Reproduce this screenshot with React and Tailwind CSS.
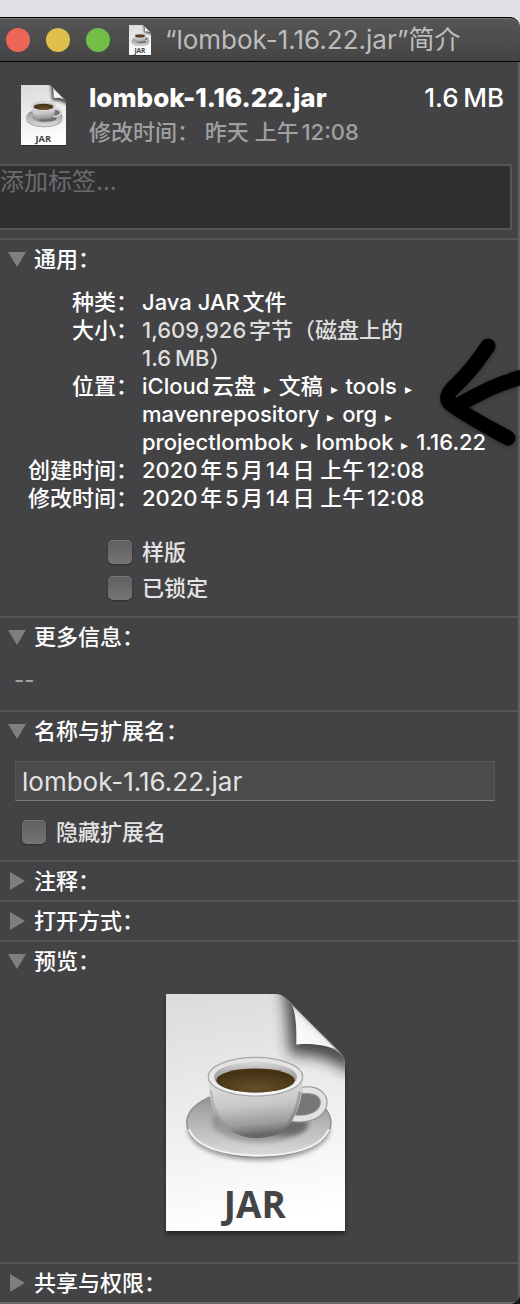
import React, { useState } from 'react';

const JarIcon = ({ id, className, labelSize = 110 }) => {
    return (
        <svg viewBox="78 57 534 710" preserveAspectRatio="none" className={className} aria-hidden="true">
            <defs>
                <linearGradient id={id + '-page'} x1="0.2" y1="0" x2="0.35" y2="1">
                    <stop offset="0" stopColor="#dcdcdc" />
                    <stop offset="0.5" stopColor="#ededed" />
                    <stop offset="1" stopColor="#ffffff" />
                </linearGradient>
                <linearGradient id={id + '-fold'} x1="0" y1="1" x2="0.6" y2="0.35">
                    <stop offset="0.1" stopColor="#ffffff" />
                    <stop offset="0.7" stopColor="#f4f4f4" />
                    <stop offset="1" stopColor="#b5b5b5" />
                </linearGradient>
                <linearGradient id={id + '-cup'} x1="0" y1="0" x2="0.15" y2="1">
                    <stop offset="0" stopColor="#e4e4e4" />
                    <stop offset="0.5" stopColor="#c8c8c8" />
                    <stop offset="0.82" stopColor="#9c9c9c" />
                    <stop offset="1" stopColor="#666" />
                </linearGradient>
                <linearGradient id={id + '-saucer'} x1="0" y1="0" x2="0" y2="1">
                    <stop offset="0" stopColor="#8a8a8a" />
                    <stop offset="0.5" stopColor="#b4b4b4" />
                    <stop offset="1" stopColor="#dcdcdc" />
                </linearGradient>
                <linearGradient id={id + '-rim'} x1="0" y1="0" x2="0" y2="1">
                    <stop offset="0" stopColor="#e2e2e2" />
                    <stop offset="0.5" stopColor="#e8e8e8" />
                    <stop offset="1" stopColor="#f8f8f8" />
                </linearGradient>
                <linearGradient id={id + '-inside'} x1="0" y1="0" x2="0" y2="1">
                    <stop offset="0" stopColor="#dadada" />
                    <stop offset="0.35" stopColor="#adadad" />
                    <stop offset="1" stopColor="#858585" />
                </linearGradient>
                <radialGradient id={id + '-coffee'} cx="0.5" cy="0.8" r="0.65">
                    <stop offset="0" stopColor="#67502a" />
                    <stop offset="1" stopColor="#443214" />
                </radialGradient>
                <filter id={id + '-blur'} x="-50%" y="-50%" width="200%" height="200%">
                    <feGaussianBlur stdDeviation="20" />
                </filter>
                <filter id={id + '-soft'} x="-20%" y="-20%" width="140%" height="140%">
                    <feGaussianBlur stdDeviation="7" />
                </filter>
                <clipPath id={id + '-clip'}>
                    <path d="M78 57H405C425 58 440 72 455 92L590 225C605 238 612 250 612 268V767H78Z" />
                </clipPath>
            </defs>
            <path d="M78 66H405L612 276V777H78Z" fill="#000" opacity="0.45" filter={`url(#${id}-soft)`} />
            <g clipPath={`url(#${id}-clip)`}>
                <rect x="78" y="57" width="534" height="710" fill={`url(#${id}-page)`} />
                <path d="M425 30C436 90 444 170 446 238C520 238 570 250 640 300V30Z" fill="#222" opacity="0.8" filter={`url(#${id}-blur)`} />
                <ellipse cx="355" cy="464" rx="212" ry="92" fill="#444" opacity="0.5" filter={`url(#${id}-soft)`} />
            </g>
            <path d="M410 57C430 62 440 74 455 92C466 120 468 160 467 208C520 204 560 210 584 226C600 238 612 250 612 272C609 252 602 240 588 222L456 90C440 72 425 58 410 57Z" fill="#999" />
            <path d="M455 92C466 120 468 160 467 208C510 204 552 210 584 222Z" fill={`url(#${id}-fold)`} />

            <ellipse cx="355" cy="442" rx="215" ry="104" fill={`url(#${id}-saucer)`} stroke="#8b8b8b" strokeWidth="4" />
            <path d="M146 462C170 520 262 541 355 541C448 541 540 520 564 462" fill="none" stroke="#f2f2f2" strokeWidth="6" />
            <ellipse cx="360" cy="440" rx="145" ry="62" fill="#707070" opacity="0.45" filter={`url(#${id}-soft)`} />
            <ellipse cx="430" cy="452" rx="70" ry="30" fill="#3d3d3d" opacity="0.5" filter={`url(#${id}-soft)`} />
            <path d="M484 346C530 340 552 362 548 388C542 420 500 436 455 430" fill="#777" stroke="#909090" strokeWidth="23" />
            <path d="M484 346C530 340 552 362 548 388C542 420 500 436 455 428" fill="none" stroke="#e2e2e2" strokeWidth="17" />
            <path d="M204 310C206 370 218 420 256 455C285 482 320 489 350 489C385 489 415 480 440 455C472 422 485 370 486 310Z" fill={`url(#${id}-cup)`} />
            <path d="M212 345C217 400 235 432 262 454" fill="none" stroke="#888" strokeWidth="6" opacity="0.4" />
            <path d="M477 350C470 400 452 440 425 463" fill="none" stroke="#777" strokeWidth="8" opacity="0.5" />
            <ellipse cx="345" cy="305" rx="141" ry="58" fill={`url(#${id}-rim)`} stroke="#a8a8a8" strokeWidth="4" />
            <ellipse cx="345" cy="306" rx="124" ry="46" fill={`url(#${id}-inside)`} />
            <ellipse cx="345" cy="316" rx="117" ry="36" fill={`url(#${id}-coffee)`} />
            <text x="343" y="728" textAnchor="middle" fontSize={labelSize} fill="#444" className="font-['Open_Sans',sans-serif] font-bold">
                JAR
            </text>
        </svg>
    );
};

const Section = ({ title, defaultOpen = false, children }) => {
    const [open, setOpen] = useState(defaultOpen);

    return (
        <section className="border-t-2 border-[#565658]">
            <h2>
                <button
                    type="button"
                    aria-expanded={open}
                    onClick={() => setOpen(!open)}
                    className="flex h-[38px] w-full items-center gap-2 pl-2 text-left font-medium text-white"
                >
                    <svg viewBox="0 0 18 18" className="h-[18px] w-[18px] fill-[#7f7f80]" aria-hidden="true">
                        {open ? <path d="M0 2H18L9 17Z" /> : <path d="M2 0V18L17 9Z" />}
                    </svg>
                    {title}
                </button>
            </h2>
            {open && children}
        </section>
    );
};

const Checkbox = ({ id, label }) => {
    return (
        <div className="flex h-9 items-center gap-[10px]">
            <input
                id={id}
                type="checkbox"
                className="h-6 w-6 appearance-none rounded-[5px] bg-linear-to-b from-[#5f5f61] to-[#757577] shadow-[0_1px_2px_rgba(0,0,0,0.35),inset_0_1px_0_#77777a] checked:bg-blue-500"
            />
            <label htmlFor={id} className="text-[#e3e3e3]">{label}</label>
        </div>
    );
};

const Row = ({ label, muted = false, children }) => {
    return (
        <div className="flex">
            <dt className="w-[138px] shrink-0 text-right">{label}</dt>
            <dd className={muted ? 'ml-1 text-[#dedede]' : 'ml-1'}>{children}</dd>
        </div>
    );
};

const Sep = () => <span className="mx-[2px] text-[14px] leading-none">▸</span>;

const App = () => {
    return (
        <div
            lang="zh-CN"
            className="bg-[linear-gradient(#e1e1e7_0,#d8d8de_50%,#141414_50%)] pt-[17px] font-['Inter','Noto_Sans_CJK_SC',sans-serif] text-[22px] leading-7 [text-autospace:normal]"
        >
            <main className="relative overflow-hidden rounded-r-[10px] bg-[#434345] font-medium text-white">
                <header className="flex h-[45px] items-center rounded-tr-[10px] border-y border-black bg-linear-to-b from-[#565657] to-[#444445] pl-[6px] shadow-[inset_0_1px_0_#77777a]">
                    <div className="flex gap-4">
                        <button type="button" aria-label="关闭" className="h-6 w-6 rounded-full bg-[#ec6559]" />
                        <button type="button" aria-label="最小化" className="h-6 w-6 rounded-full bg-[#e0bf4c]" />
                        <button type="button" aria-label="缩放" className="h-6 w-6 rounded-full bg-[#72be47]" />
                    </div>
                    <JarIcon id="title" labelSize={160} className="ml-[19px] h-[30px] w-[22px] overflow-visible" />
                    <h1 className="ml-[14px] text-[26px] font-normal whitespace-nowrap text-[#bdbdbe]">“lombok-1.16.22.jar”简介</h1>
                </header>

                <div className="border-r-2 border-b-2 border-r-[#5f5f60] border-b-[#6b6b6d]">
                    <div className="flex pt-[18px] pr-[14px] pb-4 pl-[21px]">
                        <JarIcon id="head" className="mt-[5px] h-[60px] w-[45px] overflow-visible" />
                        <div className="ml-[23px] grow">
                            <div className="flex justify-between text-[26px] leading-9">
                                <strong className="font-extrabold">lombok-1.16.22.jar</strong>
                                <span>1.6{'\u2009'}MB</span>
                            </div>
                            <p className="leading-8 text-[#a0a0a1]">修改时间： 昨天 上午12:08</p>
                        </div>
                    </div>

                    <textarea
                        aria-label="标签"
                        placeholder="添加标签..."
                        className="mr-[6px] mb-2 block h-[66px] w-[calc(100%-6px)] resize-none border-y-2 border-r-2 border-[#565658] bg-[#303032] text-[24px] leading-8 font-normal [text-autospace:no-autospace] placeholder:text-[#6b6b6d]"
                    />

                    <Section title="通用：" defaultOpen>
                        <dl className="pt-[10px]">
                            <Row label="种类：">Java JAR文件</Row>
                            <Row label="大小：" muted>
                                1,609,926字节（磁盘上的<br />
                                1.6{'\u2009'}MB）
                            </Row>
                            <Row label="位置：">
                                iCloud云盘 <Sep /> 文稿 <Sep /> tools <Sep /><br />
                                mavenrepository <Sep /> org <Sep /><br />
                                projectlombok <Sep /> lombok <Sep /> 1.16.22
                            </Row>
                            <Row label="创建时间：">2020年5月14日 上午12:08</Row>
                            <Row label="修改时间：">2020年5月14日 上午12:08</Row>
                        </dl>
                        <div className="pt-[22px] pb-[10px] pl-[108px]">
                            <Checkbox id="stationery" label="样版" />
                            <Checkbox id="locked" label="已锁定" />
                        </div>
                    </Section>

                    <Section title="更多信息：" defaultOpen>
                        <p className="pt-[10px] pb-4 pl-[14px] text-[#a0a0a1]">--</p>
                    </Section>

                    <Section title="名称与扩展名：" defaultOpen>
                        <div className="pt-[11px] pr-[23px] pb-[10px] pl-[15px]">
                            <input
                                type="text"
                                aria-label="名称与扩展名"
                                defaultValue="lombok-1.16.22.jar"
                                className="mb-[13px] block h-10 w-full border border-[#555557] border-b-[#7a7a7c] bg-[#4b4b4c] px-[6px] text-[26px] font-normal text-[#e3e3e3]"
                            />
                            <div className="pl-[7px]">
                                <Checkbox id="hide-extension" label="隐藏扩展名" />
                            </div>
                        </div>
                    </Section>

                    <Section title="注释：" />
                    <Section title="打开方式：" />

                    <Section title="预览：" defaultOpen>
                        <div className="flex justify-center pt-[14px] pr-[8px] pb-[31px]">
                            <JarIcon id="preview" className="h-[237px] w-[179px] overflow-visible" />
                        </div>
                    </Section>

                    <Section title="共享与权限：" />
                </div>

                {/* hand-drawn arrow pointing at the location row */}
                <svg
                    viewBox="430 330 90 120"
                    className="pointer-events-none absolute top-[313px] right-0 h-[120px] w-[90px] fill-none stroke-black drop-shadow-[0_1px_2px_rgba(0,0,0,0.4)]"
                    strokeWidth="15"
                    strokeLinecap="round"
                    strokeLinejoin="round"
                    aria-hidden="true"
                >
                    <path d="M488 346C476 364 466 376 454 387C447 394 445 400 452 405C470 418 490 428 508 438" />
                    <path d="M459 405C480 392 502 382 526 376" />
                </svg>
            </main>
        </div>
    );
};

export default App;
